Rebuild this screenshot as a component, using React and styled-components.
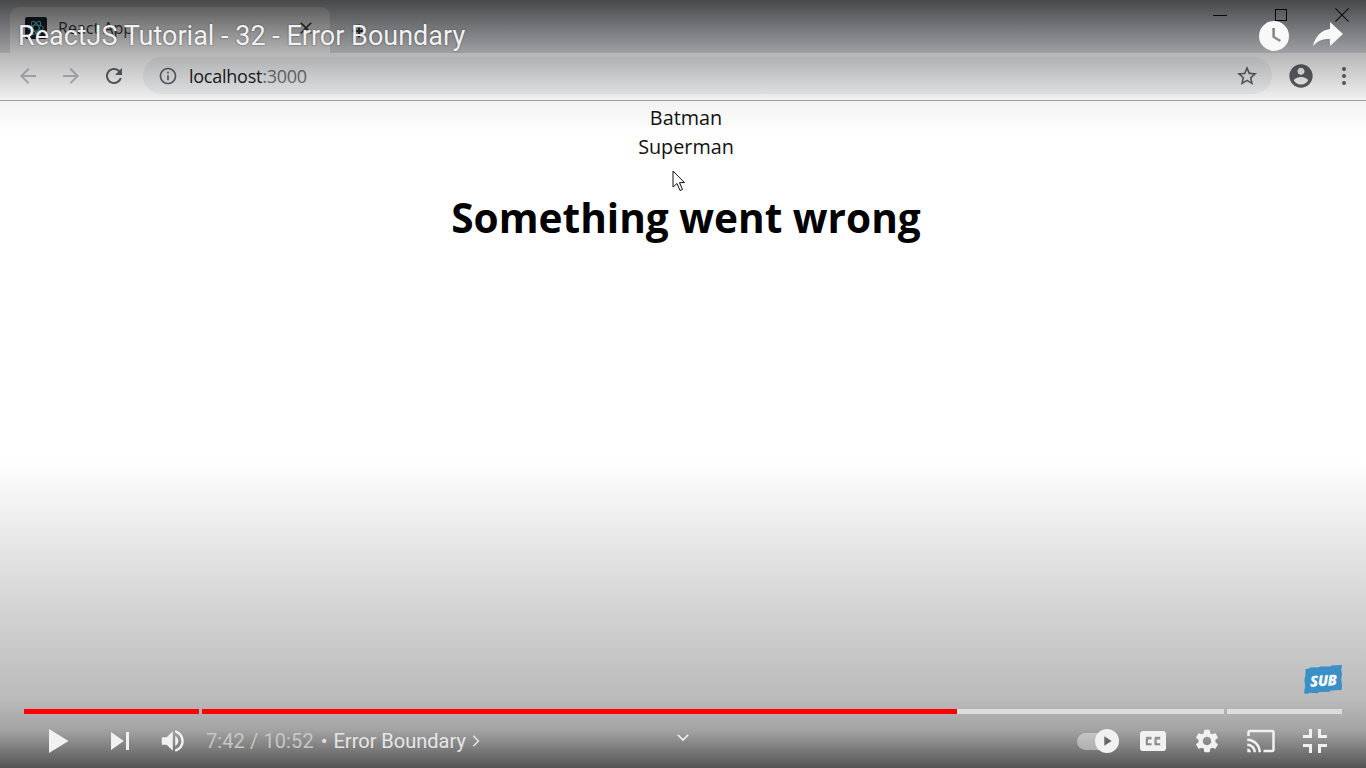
import React from 'react'
import styled, { createGlobalStyle } from 'styled-components'

const GlobalStyle = createGlobalStyle`
  html, body {
    margin: 0;
    padding: 0;
    background: #fff;
    overflow: hidden;
  }
`

const Stage = styled.div`
  position: relative;
  width: 1366px;
  height: 768px;
  overflow: hidden;
  background: #fff;
`

const Glyph = styled.svg`
  display: block;
  flex: none;
  width: ${p => p.$size}px;
  height: ${p => p.$size}px;
  fill: ${p => p.$color};
`

const Icon = ({ d, size = 24, color = '#5f6368', box = 24 }) => (
  <Glyph $size={size} $color={color} viewBox={`0 0 ${box} ${box}`}>
    <path d={d} />
  </Glyph>
)

/* browser window captured in the video */
const TabStrip = styled.div`
  display: flex;
  align-items: flex-end;
  height: 53px;
  padding-left: 10px;
  background: #dee1e6;
`

const Tab = styled.div`
  display: flex;
  align-items: center;
  width: 320px;
  height: 46px;
  box-sizing: border-box;
  padding: 0 14px 4px 15px;
  border-radius: 9px 9px 0 0;
  background: #fff;
`

const Favicon = styled.div`
  display: flex;
  align-items: center;
  justify-content: center;
  width: 22px;
  height: 22px;
  border-radius: 2px;
  background: #20232a;
`

const TabTitle = styled.span`
  flex: 1;
  margin-left: 11px;
  font: 16px "Open Sans", sans-serif;
  color: #3c4043;
`

const NewTab = styled.div`
  margin: 0 0 11px 18px;
`

const WindowButtons = styled.div`
  display: flex;
  align-self: flex-start;
  margin-left: auto;
  margin-right: -6px;
`

const WindowButton = styled.div`
  display: flex;
  align-items: center;
  justify-content: center;
  width: 61px;
  height: 30px;
`

const Toolbar = styled.div`
  display: flex;
  align-items: center;
  height: 45px;
  padding: 0 0 2px 6px;
  border-bottom: 1px solid #a8a8a8;
  background: #fff;
`

const ToolButton = styled.div`
  display: flex;
  align-items: center;
  justify-content: center;
  width: ${p => p.$width || 43}px;
  height: 40px;
`

const AddressBar = styled.div`
  display: flex;
  align-items: center;
  width: 1129px;
  height: 37px;
  box-sizing: border-box;
  margin-left: 8px;
  padding: 0 13px 0 15px;
  border-radius: 19px;
  background: #f1f3f4;
`

const Host = styled.span`
  flex: 1;
  margin-left: 11px;
  font: 18px "Open Sans", sans-serif;
  letter-spacing: -0.25px;
  color: #202124;
`

const Port = styled.span`
  color: #70757a;
`

const Dots = styled.div`
  display: flex;
  flex-direction: column;
  gap: 3px;
`

const Dot = styled.span`
  width: 4px;
  height: 4px;
  border-radius: 50%;
  background: #5f6368;
`

/* the page being shown */
const Page = styled.main`
  padding: 2px 0 0 6px;
  text-align: center;
  color: #000;
  font-family: "Open Sans", "Noto Sans", sans-serif;
`

const Hero = styled.div`
  font-size: 19.8px;
  line-height: 29px;
  color: #111;
`

const ErrorTitle = styled.h1`
  margin: 29px 0 0;
  font-size: 40.6px;
  line-height: 56px;
  font-weight: 700;
`

const Pointer = styled.svg`
  position: absolute;
  left: 672px;
  top: 170px;
  width: 14px;
  height: 22px;
`

/* youtube player chrome, sits over the video */
const TopShade = styled.div`
  position: absolute;
  inset: 0 0 auto 0;
  height: 135px;
  background: linear-gradient(to bottom, rgba(0,0,0,.68), rgba(0,0,0,.29) 53px, rgba(0,0,0,.05) 101px, rgba(0,0,0,0));
`

const BottomShade = styled.div`
  position: absolute;
  inset: auto 0 0 0;
  height: 308px;
  background: linear-gradient(to bottom, rgba(0,0,0,0), rgba(0,0,0,.16) 140px, rgba(0,0,0,.27) 240px, rgba(0,0,0,.36) 270px, rgba(0,0,0,.67));
`

const PlayerTop = styled.div`
  position: absolute;
  inset: 20px 23px auto 18px;
  display: flex;
  align-items: center;
  justify-content: space-between;
`

const VideoTitle = styled.div`
  font: 27px Roboto, sans-serif;
  color: #f1f1f1;
  text-shadow: 0 0 2px rgba(0,0,0,.5);
`

const TopActions = styled.div`
  display: flex;
  align-items: center;
  gap: 24px;
`

const ClockFace = styled.div`
  width: 30px;
  height: 30px;
`

const SubBadge = styled.div`
  position: absolute;
  left: 1304px;
  top: 665px;
  display: flex;
  align-items: center;
  justify-content: center;
  width: 38px;
  height: 29px;
  background: #3a8fc6;
  clip-path: polygon(4% 14%, 14% 12%, 16% 9%, 40% 8%, 42% 5%, 70% 5%, 72% 2%, 100% 0, 98% 18%, 100% 32%, 98% 52%, 100% 68%, 99% 86%, 70% 88%, 68% 92%, 40% 93%, 36% 97%, 14% 96%, 10% 100%, 0 97%, 3% 72%, 1% 52%, 4% 32%);
`

const SubText = styled.span`
  font: italic 800 15px "Open Sans", sans-serif;
  color: #f4f8fb;
  letter-spacing: -0.6px;
  transform: rotate(-3deg);
`

const PlayerBottom = styled.div`
  position: absolute;
  inset: auto 24px 0 24px;
`

const Progress = styled.div`
  display: flex;
  gap: 3px;
  height: 5px;
`

const Chapter = styled.div`
  width: ${p => p.$width}px;
  height: 100%;
  background: linear-gradient(to right, #f00 ${p => p.$played}%, #ddd ${p => p.$played}%);
`

const Controls = styled.div`
  display: grid;
  grid-template-columns: 1fr auto 1fr;
  align-items: center;
  height: 54px;
`

const ControlGroup = styled.div`
  display: flex;
  align-items: center;
  justify-content: ${p => (p.$end ? 'flex-end' : 'flex-start')};
`

const ControlButton = styled.div`
  display: flex;
  align-items: center;
  justify-content: center;
  width: ${p => p.$width || 54}px;
  height: 54px;
`

const TimeText = styled.span`
  margin-left: 6px;
  font: 20px Roboto, sans-serif;
  letter-spacing: 0.1px;
  color: #c6c6c6;
`

const ChapterTitle = styled.span`
  margin-left: 6px;
  font: 20px Roboto, sans-serif;
  color: #e6e6e6;
`

const Separator = styled.span`
  margin-left: 7px;
  font: 20px Roboto, sans-serif;
  color: #ddd;
`

const Chevron = styled.div`
  padding-bottom: 8px;
`

const Toggle = styled.div`
  position: relative;
  width: 42px;
  height: 17px;
  border-radius: 9px;
  background: rgba(255,255,255,.4);
`

const ToggleKnob = styled.div`
  position: absolute;
  right: 0;
  top: -4px;
  display: flex;
  align-items: center;
  justify-content: center;
  width: 24px;
  height: 24px;
  border-radius: 50%;
  background: #f1f1f1;
`

const icons = {
  back: 'M20 11H7.83l5.59-5.59L12 4l-8 8 8 8 1.41-1.41L7.83 13H20v-2z',
  forward: 'M12 4l-1.41 1.41L16.17 11H4v2h12.17l-5.58 5.59L12 20l8-8z',
  reload: 'M17.65 6.35C16.2 4.9 14.21 4 12 4c-4.42 0-7.99 3.58-7.99 8s3.57 8 7.99 8c3.73 0 6.84-2.55 7.73-6h-2.08c-.82 2.33-3.04 4-5.65 4-3.31 0-6-2.69-6-6s2.69-6 6-6c1.66 0 3.14.69 4.22 1.78L13 11h7V4l-2.35 2.35z',
  info: 'M11 7h2v2h-2zm0 4h2v6h-2zm1-9C6.48 2 2 6.48 2 12s4.48 10 10 10 10-4.48 10-10S17.52 2 12 2zm0 18c-4.41 0-8-3.59-8-8s3.59-8 8-8 8 3.59 8 8-3.59 8-8 8z',
  star: 'M22 9.24l-7.19-.62L12 2 9.19 8.63 2 9.24l5.46 4.73L5.82 21 12 17.27 18.18 21l-1.63-7.03L22 9.24zM12 15.4l-3.76 2.27 1-4.28-3.32-2.88 4.38-.38L12 6.1l1.71 4.04 4.38.38-3.32 2.88 1 4.28L12 15.4z',
  account: 'M12 2C6.48 2 2 6.48 2 12s4.48 10 10 10 10-4.48 10-10S17.52 2 12 2zm0 3c1.66 0 3 1.34 3 3s-1.34 3-3 3-3-1.34-3-3 1.34-3 3-3zm0 14.2c-2.5 0-4.71-1.28-6-3.22.03-1.99 4-3.08 6-3.08 1.99 0 5.97 1.09 6 3.08-1.29 1.94-3.5 3.22-6 3.22z',
  close: 'M19 6.41L17.59 5 12 10.59 6.41 5 5 6.41 10.59 12 5 17.59 6.41 19 12 13.41 17.59 19 19 17.59 13.41 12z',
  thinClose: 'M1.7 1 L8 7.3 14.3 1 15 1.7 8.7 8 15 14.3 14.3 15 8 8.7 1.7 15 1 14.3 7.3 8 1 1.7z',
  minimize: 'M1 8h14v1H1z',
  maximize: 'M2 2h12v12H2zM3 3v10h10V3z',
  plus: 'M19 13h-6v6h-2v-6H5v-2h6V5h2v6h6v2z',
  clock: 'M15 0a15 15 0 1 0 0 30a15 15 0 1 0 0-30zM13.4 7h2.4v8.2l6.2 3.9-1.2 2-7.4-4.7z',
  share: 'M17 1 L30 13 17 25 V18 C9.5 17.5 4.5 20 0 25 C2 16 8 9 17 8z',
  play: 'M12 26 18.5 22 18.5 14 12 10zM18.5 22 25 18 25 18 18.5 14z',
  next: 'M12 24 20.5 18 12 12V24zM22 12v12h2V12h-2z',
  volume: 'M8 21L12 21L17 26L17 10L12 15L8 15L8 21ZM19 14L19 22C20.48 21.32 21.5 19.77 21.5 18C21.5 16.26 20.48 14.74 19 14ZM19 11.29C21.89 12.15 24 14.83 24 18C24 21.17 21.89 23.85 19 24.71L19 26.77C23.01 25.86 26 22.28 26 18C26 13.72 23.01 10.14 19 9.23L19 11.29Z',
  captions: 'M11 11C9.89 11 9 11.9 9 13V23C9 24.1 9.89 25 11 25H25C26.1 25 27 24.1 27 23V13C27 11.9 26.1 11 25 11H11ZM17 17H14.5V19.5H17V21H14C13.45 21 13 20.55 13 20V16C13 15.45 13.45 15 14 15H17V17ZM23 17H20.5V19.5H23V21H20C19.45 21 19 20.55 19 20V16C19 15.45 19.45 15 20 15H23V17Z',
  gear: 'M19.14 12.94c.04-.3.06-.61.06-.94 0-.32-.02-.64-.07-.94l2.03-1.58c.18-.14.23-.41.12-.61l-1.92-3.32c-.12-.22-.37-.29-.59-.22l-2.39.96c-.5-.38-1.03-.7-1.62-.94l-.36-2.54c-.04-.24-.24-.41-.48-.41h-3.84c-.24 0-.43.17-.47.41l-.36 2.54c-.59.24-1.13.57-1.62.94l-2.39-.96c-.22-.08-.47 0-.59.22L2.74 8.87c-.12.21-.08.47.12.61l2.03 1.58c-.05.3-.09.63-.09.94s.02.64.07.94l-2.03 1.58c-.18.14-.23.41-.12.61l1.92 3.32c.12.22.37.29.59.22l2.39-.96c.5.38 1.03.7 1.62.94l.36 2.54c.05.24.24.41.48.41h3.84c.24 0 .44-.17.47-.41l.36-2.54c.59-.24 1.13-.56 1.62-.94l2.39.96c.22.08.47 0 .59-.22l1.92-3.32c.12-.22.07-.47-.12-.61l-2.01-1.58zM12 15.6c-1.98 0-3.6-1.62-3.6-3.6s1.62-3.6 3.6-3.6 3.6 1.62 3.6 3.6-1.62 3.6-3.6 3.6z',
  cast: 'M21 3H3c-1.1 0-2 .9-2 2v3h2V5h18v14h-7v2h7c1.1 0 2-.9 2-2V5c0-1.1-.9-2-2-2zM1 18v3h3c0-1.66-1.34-3-3-3zm0-4v2c2.76 0 5 2.24 5 5h2c0-3.87-3.13-7-7-7zm0-4v2c4.97 0 9 4.03 9 9h2c0-6.08-4.93-11-11-11z',
  exitFull: 'M14 14H10V16H16V10H14V14ZM22 14V10H20V16H26V14H22ZM20 26H22V22H26V20H20V26ZM10 22H14V26H16V20H10V22Z',
  chevronRight: 'M9 5.6 10.4 4.2 18 12 10.4 19.8 9 18.4 15.2 12z',
  chevronDown: 'M6.4 8.6 12 14.2 17.6 8.6 19 10 12 17 5 10z',
  knobPlay: 'M8 5v14l11-7z',
}

const App = () => {
  return (
    <Stage>
      <GlobalStyle />
      <TabStrip>
        <Tab>
          <Favicon>
            <Glyph $size={18} $color="none" viewBox="0 0 24 24" stroke="#61dafb" strokeWidth="1.2">
              <ellipse cx="12" cy="12" rx="10" ry="4" />
              <ellipse cx="12" cy="12" rx="10" ry="4" transform="rotate(60 12 12)" />
              <ellipse cx="12" cy="12" rx="10" ry="4" transform="rotate(120 12 12)" />
            </Glyph>
          </Favicon>
          <TabTitle>React App</TabTitle>
          <Icon d={icons.close} size={20} color="#3c4043" />
        </Tab>
        <NewTab>
          <Icon d={icons.plus} size={22} color="#3c4043" />
        </NewTab>
        <WindowButtons>
          <WindowButton><Icon d={icons.minimize} size={16} box={16} color="#111" /></WindowButton>
          <WindowButton><Icon d={icons.maximize} size={16} box={16} color="#111" /></WindowButton>
          <WindowButton><Icon d={icons.thinClose} size={16} box={16} color="#111" /></WindowButton>
        </WindowButtons>
      </TabStrip>
      <Toolbar>
        <ToolButton><Icon d={icons.back} color="#bdc1c6" /></ToolButton>
        <ToolButton><Icon d={icons.forward} color="#bdc1c6" /></ToolButton>
        <ToolButton><Icon d={icons.reload} /></ToolButton>
        <AddressBar>
          <Icon d={icons.info} size={20} />
          <Host>localhost<Port>:3000</Port></Host>
          <Icon d={icons.star} />
        </AddressBar>
        <ToolButton $width={58}><Icon d={icons.account} size={28} /></ToolButton>
        <ToolButton $width={28}>
          <Dots><Dot /><Dot /><Dot /></Dots>
        </ToolButton>
      </Toolbar>

      <Page>
        <Hero>Batman</Hero>
        <Hero>Superman</Hero>
        <ErrorTitle>Something went wrong</ErrorTitle>
      </Page>

      <Pointer viewBox="0 0 14 22">
        <path d="M1 1V17L5 13.5L8 20.5L10.5 19.5L7.5 12.6H12.5z" fill="#fff" stroke="#111" strokeWidth="1" />
      </Pointer>

      <TopShade />
      <BottomShade />

      <PlayerTop>
        <VideoTitle>ReactJS Tutorial - 32 - Error Boundary</VideoTitle>
        <TopActions>
          <ClockFace><Icon d={icons.clock} size={30} box={30} color="#f8f8f8" /></ClockFace>
          <Icon d={icons.share} size={30} box={30} color="#f8f8f8" />
        </TopActions>
      </PlayerTop>

      <SubBadge><SubText>SUB</SubText></SubBadge>

      <PlayerBottom>
        <Progress>
          <Chapter $width={175} $played={100} />
          <Chapter $width={1022} $played={73.9} />
          <Chapter $width={115} $played={0} />
        </Progress>
        <Controls>
          <ControlGroup>
            <ControlButton $width={68}><Icon d={icons.play} size={54} box={36} color="#f1f1f1" /></ControlButton>
            <ControlButton $width={56}><Icon d={icons.next} size={54} box={36} color="#f1f1f1" /></ControlButton>
            <ControlButton $width={52}><Icon d={icons.volume} size={44} box={36} color="#f1f1f1" /></ControlButton>
            <TimeText>7:42 / 10:52</TimeText>
            <Separator>•</Separator>
            <ChapterTitle>Error Boundary</ChapterTitle>
            <Icon d={icons.chevronRight} size={18} color="#e6e6e6" />
          </ControlGroup>
          <Chevron><Icon d={icons.chevronDown} size={20} color="#eee" /></Chevron>
          <ControlGroup $end>
            <ControlButton $width={56}>
              <Toggle>
                <ToggleKnob><Icon d={icons.knobPlay} size={16} color="#666" /></ToggleKnob>
              </Toggle>
            </ControlButton>
            <ControlButton><Icon d={icons.captions} size={52} box={36} color="#f1f1f1" /></ControlButton>
            <ControlButton><Icon d={icons.gear} size={28} color="#f1f1f1" /></ControlButton>
            <ControlButton><Icon d={icons.cast} size={30} color="#f1f1f1" /></ControlButton>
            <ControlButton><Icon d={icons.exitFull} size={54} box={36} color="#f1f1f1" /></ControlButton>
          </ControlGroup>
        </Controls>
      </PlayerBottom>
    </Stage>
  )
}

export default App
